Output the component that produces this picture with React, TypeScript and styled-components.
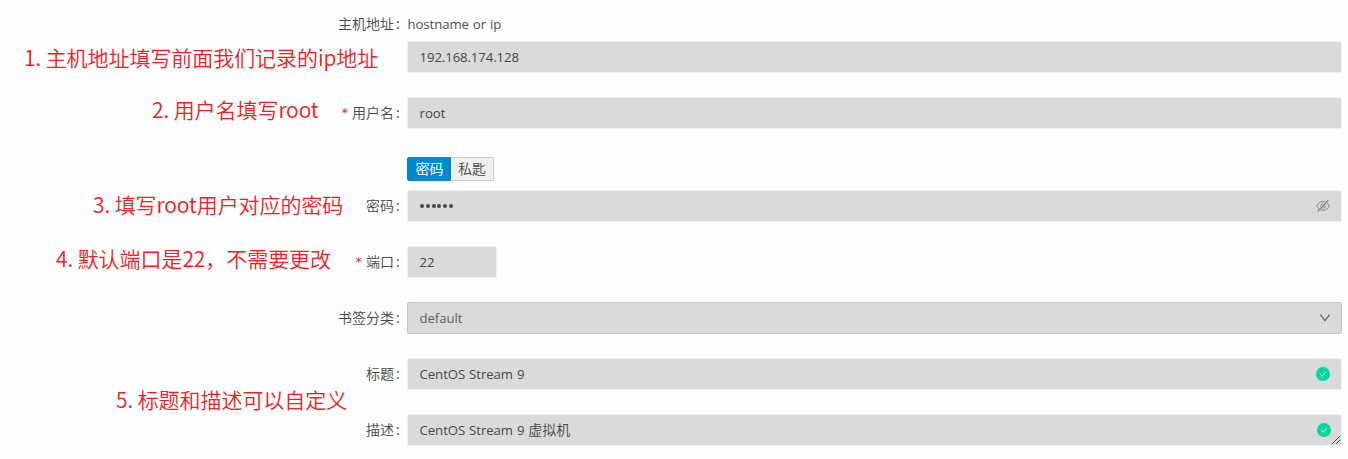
import React from "react";
import styled, { createGlobalStyle } from "styled-components";

const GlobalStyle = createGlobalStyle`
  * { box-sizing: border-box; }
  body {
    margin: 0;
    background: #fdfdfd;
    font-family: "Open Sans", "Noto Sans CJK SC", sans-serif;
    font-size: 14px;
    color: #505050;
  }
`;

const Page = styled.main`
  position: relative;
  width: 1348px;
  height: 459px;
  overflow: hidden;
  padding: 8px 6px 0 0;
`;

const Form = styled.form`
  display: flex;
  flex-direction: column;
  gap: 24px;
`;

const Item = styled.div`
  display: grid;
  grid-template-columns: 399px 1fr;
  column-gap: 8px;
`;

const Label = styled.label<{ $offset?: number }>`
  display: flex;
  justify-content: flex-end;
  align-items: center;
  height: 32px;
  margin-top: ${(p) => p.$offset ?? 0}px;
  font-weight: 350;
  line-height: 22px;
  white-space: nowrap;
  color: #484848;
`;

const Colon = styled.span`
  width: 5px;
  padding-left: 2px;
  font-weight: 400;
`;

const Required = styled.span`
  margin-right: 4px;
  color: #e0245e;
  font-family: "DejaVu Sans", sans-serif;
  font-size: 13px;
  font-weight: 400;
  line-height: 14px;
  padding-bottom: 1px;
`;

const Control = styled.div`
  display: flex;
  flex-direction: column;
`;

const Hint = styled.div`
  height: 33px;
  padding-left: 0.5px;
  font-size: 13.2px;
  line-height: 33px;
  letter-spacing: -0.08px;
  word-spacing: 0.6px;
`;

const Box = styled.div<{ $width?: number; $outlined?: boolean }>`
  position: relative;
  display: flex;
  align-items: center;
  justify-content: space-between;
  width: ${(p) => (p.$width ? `${p.$width}px` : "100%")};
  height: 32px;
  padding: 0 11px;
  background: #dadada;
  border: 1px solid ${(p) => (p.$outlined ? "#c6c6c6" : "#f1f1f1")};
  border-radius: 2px;
`;

const Value = styled.span<{ $spacing?: number; $muted?: boolean }>`
  padding-left: 0.5px;
  font-size: 13.2px;
  line-height: 22px;
  white-space: nowrap;
  letter-spacing: ${(p) => p.$spacing ?? -0.05}px;
  word-spacing: 0.5px;
  color: ${(p) => (p.$muted ? "#606060" : "#464646")};
`;

const Han = styled.span`
  font-size: 14px;
  font-weight: 350;
  letter-spacing: 0;
`;

const Dots = styled.span`
  display: flex;
  gap: 1.8px;
  padding-left: 1px;
`;

const Dot = styled.i`
  width: 4px;
  height: 4px;
  border-radius: 50%;
  background: #484848;
`;

const Tabs = styled.div`
  display: flex;
  height: 24px;
  margin: 4px 0 9px;
`;

const Tab = styled.button<{ $active?: boolean }>`
  height: 24px;
  width: ${(p) => (p.$active ? 44 : 43)}px;
  padding: 0 0 0 ${(p) => (p.$active ? 1 : 0)}px;
  font: inherit;
  font-weight: ${(p) => (p.$active ? 400 : 350)};
  line-height: 22px;
  color: ${(p) => (p.$active ? "#fff" : "#484848")};
  background: ${(p) => (p.$active ? "#0088cc" : "#f0f0f0")};
  border: 1px solid ${(p) => (p.$active ? "#0088cc" : "#c8c8c8")};
  border-left-width: ${(p) => (p.$active ? 1 : 0)}px;
  border-radius: ${(p) => (p.$active ? "2px 0 0 2px" : "0 2px 2px 0")};
`;

const Icon = styled.svg<{ $shift?: number }>`
  display: block;
  flex: none;
  margin-right: ${(p) => p.$shift ?? 0}px;
`;

const Grip = styled.svg`
  position: absolute;
  right: 0;
  bottom: 0;
`;

const Note = styled.p<{ $x: number; $y: number }>`
  position: absolute;
  left: ${(p) => p.$x}px;
  top: ${(p) => p.$y}px;
  margin: 0;
  font-family: "Noto Sans CJK SC", sans-serif;
  font-size: 21px;
  font-weight: 350;
  line-height: 30px;
  letter-spacing: -0.06px;
  white-space: nowrap;
  color: #ee1c24;
`;

const EyeOff = () => (
  <Icon width="14" height="14" viewBox="0 0 14 14" fill="none" stroke="#858585">
    <path d="M.6 7C2 4.1 4.1 2.7 7 2.7S12 4.1 13.4 7C12 9.9 9.9 11.3 7 11.3S2 9.9.6 7Z" />
    <circle cx="7" cy="7" r="2.2" />
    <path d="M12.2 1.2 1.6 12.6" stroke="#dadada" strokeWidth="2.2" />
    <path d="M12.2 1.2 1.6 12.6" strokeWidth="1.3" />
  </Icon>
);

const Check = ({ shift }: { shift?: number }) => (
  <Icon $shift={shift} width="14" height="14" viewBox="0 0 14 14">
    <circle cx="7" cy="7" r="7" fill="#06d6a0" />
    <path d="m4.2 7.1 2 2.2 3.6-4.5" fill="none" stroke="#d4f0e7" />
  </Icon>
);

const Chevron = () => (
  <Icon $shift={-1} width="12" height="12" viewBox="0 0 12 12" fill="none" stroke="#666" strokeWidth="1.3">
    <path d="m1.4 2.6 4.6 6 4.6-6" />
  </Icon>
);

type FieldProps = {
  label: string;
  required?: boolean;
  offset?: number;
  children: React.ReactNode;
};

const Field = ({ label, required, offset, children }: FieldProps) => (
  <Item>
    <Label $offset={offset}>
      {required && <Required>*</Required>}
      {label}
      <Colon>:</Colon>
    </Label>
    <Control>{children}</Control>
  </Item>
);

const notes = [
  { x: 24, y: 42, text: "1. 主机地址填写前面我们记录的ip地址" },
  { x: 152, y: 94, text: "2. 用户名填写root" },
  { x: 93, y: 189, text: "3. 填写root用户对应的密码" },
  { x: 56, y: 243, text: "4. 默认端口是22，不需要更改" },
  { x: 116, y: 384, text: "5. 标题和描述可以自定义" },
];

export default function App() {
  return (
    <Page>
      <GlobalStyle />
      <Form>
        <Field label="主机地址">
          <Hint>hostname or ip</Hint>
          <Box><Value $spacing={-0.1}>192.168.174.128</Value></Box>
        </Field>
        <Field label="用户名" required>
          <Box><Value $spacing={0}>root</Value></Box>
        </Field>
        <Field label="密码" offset={37}>
          <Tabs>
            <Tab type="button" $active>密码</Tab>
            <Tab type="button">私匙</Tab>
          </Tabs>
          <Box>
            <Dots>{Array.from({ length: 6 }, (_, i) => <Dot key={i} />)}</Dots>
            <EyeOff />
          </Box>
        </Field>
        <Field label="端口" required>
          <Box $width={90}><Value>22</Value></Box>
        </Field>
        <Field label="书签分类">
          <Box $outlined><Value $muted>default</Value><Chevron /></Box>
        </Field>
        <Field label="标题">
          <Box><Value>CentOS Stream 9</Value><Check /></Box>
        </Field>
        <Field label="描述">
          <Box>
            <Value>CentOS Stream 9 <Han>虚拟机</Han></Value>
            <Check shift={-1} />
            <Grip width="10" height="10" viewBox="0 0 10 10" stroke="#505050" fill="none">
              <path d="M1 9 9 1M5 9 9 5" />
            </Grip>
          </Box>
        </Field>
      </Form>
      {notes.map((n) => (
        <Note key={n.x} $x={n.x} $y={n.y}>{n.text}</Note>
      ))}
    </Page>
  );
}
